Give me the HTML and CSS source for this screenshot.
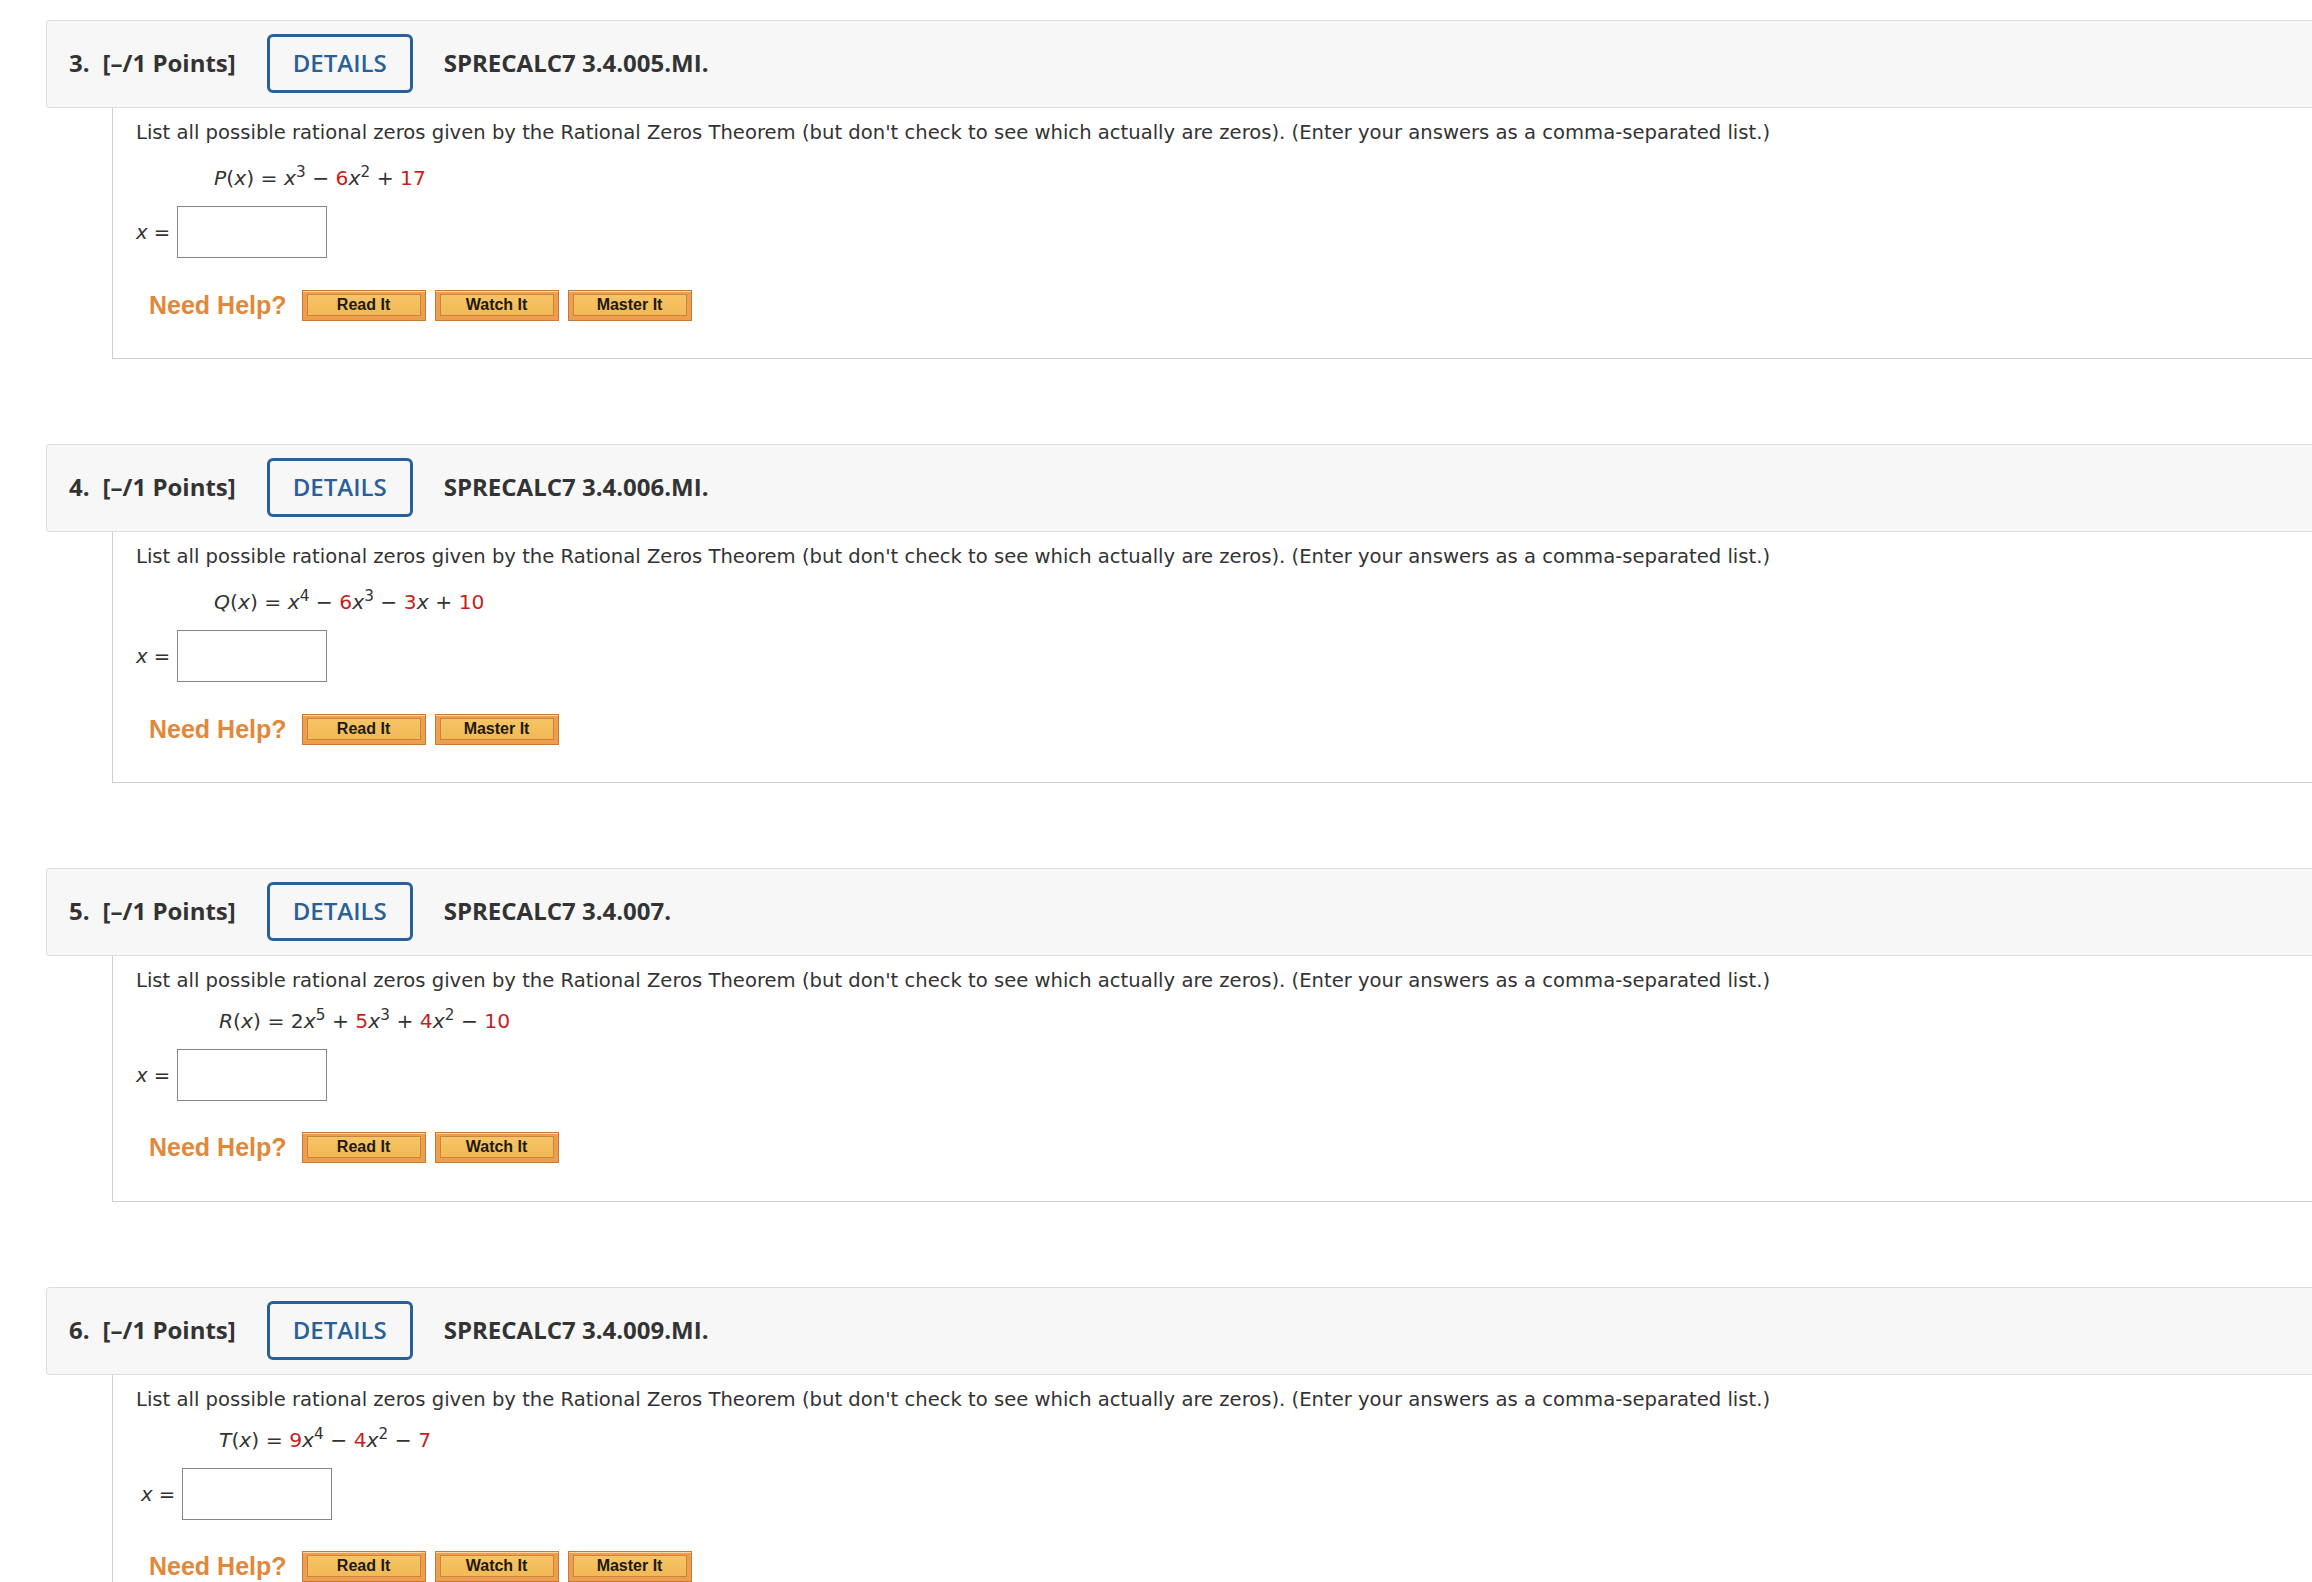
FILE: index.html
```html
<!DOCTYPE html>
<html lang="en">
<head>
<meta charset="utf-8">
<title>Questions</title>
<link rel="stylesheet" href="styles.css">
</head>
<body>
<div class="page">

  <div class="question">
    <div class="q-header">
      <span class="q-num">3.</span>
      <span class="q-points">[–/1 Points]</span>
      <span class="details">DETAILS</span>
      <span class="q-code">SPRECALC7 3.4.005.MI.</span>
    </div>
    <div class="q-body">
      <p class="q-text">List all possible rational zeros given by the Rational Zeros Theorem (but don't check to see which actually are zeros). (Enter your answers as a comma-separated list.)</p>
      <p class="eq"><i>P</i>(<i>x</i>) = <i>x</i><sup>3</sup> − <span class="red">6</span><i>x</i><sup>2</sup> + <span class="red">17</span></p>
      <div class="answer"><span class="ans-label"><i>x</i> =</span><span class="ans-box"></span></div>
      <div class="help">
        <span class="need">Need Help?</span>
        <span class="help-btn"><span class="help-inner">Read It</span></span>
        <span class="help-btn"><span class="help-inner">Watch It</span></span>
        <span class="help-btn"><span class="help-inner">Master It</span></span>
      </div>
    </div>
  </div>

  <div class="question">
    <div class="q-header">
      <span class="q-num">4.</span>
      <span class="q-points">[–/1 Points]</span>
      <span class="details">DETAILS</span>
      <span class="q-code">SPRECALC7 3.4.006.MI.</span>
    </div>
    <div class="q-body">
      <p class="q-text">List all possible rational zeros given by the Rational Zeros Theorem (but don't check to see which actually are zeros). (Enter your answers as a comma-separated list.)</p>
      <p class="eq"><i>Q</i>(<i>x</i>) = <i>x</i><sup>4</sup> − <span class="red">6</span><i>x</i><sup>3</sup> − <span class="red">3</span><i>x</i> + <span class="red">10</span></p>
      <div class="answer"><span class="ans-label"><i>x</i> =</span><span class="ans-box"></span></div>
      <div class="help">
        <span class="need">Need Help?</span>
        <span class="help-btn"><span class="help-inner">Read It</span></span>
        <span class="help-btn"><span class="help-inner">Master It</span></span>
      </div>
    </div>
  </div>

  <div class="question">
    <div class="q-header">
      <span class="q-num">5.</span>
      <span class="q-points">[–/1 Points]</span>
      <span class="details">DETAILS</span>
      <span class="q-code">SPRECALC7 3.4.007.</span>
    </div>
    <div class="q-body compact">
      <p class="q-text">List all possible rational zeros given by the Rational Zeros Theorem (but don't check to see which actually are zeros). (Enter your answers as a comma-separated list.)</p>
      <p class="eq"><i>R</i>(<i>x</i>) = 2<i>x</i><sup>5</sup> + <span class="red">5</span><i>x</i><sup>3</sup> + <span class="red">4</span><i>x</i><sup>2</sup> − <span class="red">10</span></p>
      <div class="answer"><span class="ans-label"><i>x</i> =</span><span class="ans-box"></span></div>
      <div class="help">
        <span class="need">Need Help?</span>
        <span class="help-btn"><span class="help-inner">Read It</span></span>
        <span class="help-btn"><span class="help-inner">Watch It</span></span>
      </div>
    </div>
  </div>

  <div class="question">
    <div class="q-header">
      <span class="q-num">6.</span>
      <span class="q-points">[–/1 Points]</span>
      <span class="details">DETAILS</span>
      <span class="q-code">SPRECALC7 3.4.009.MI.</span>
    </div>
    <div class="q-body compact">
      <p class="q-text">List all possible rational zeros given by the Rational Zeros Theorem (but don't check to see which actually are zeros). (Enter your answers as a comma-separated list.)</p>
      <p class="eq"><i>T</i>(<i>x</i>) = <span class="red">9</span><i>x</i><sup>4</sup> − <span class="red">4</span><i>x</i><sup>2</sup> − <span class="red">7</span></p>
      <div class="answer shifted"><span class="ans-label"><i>x</i> =</span><span class="ans-box"></span></div>
      <div class="help">
        <span class="need">Need Help?</span>
        <span class="help-btn"><span class="help-inner">Read It</span></span>
        <span class="help-btn"><span class="help-inner">Watch It</span></span>
        <span class="help-btn"><span class="help-inner">Master It</span></span>
      </div>
    </div>
  </div>

</div>
</body>
</html>
```

FILE: styles.css
```css
html, body {
  margin: 0;
  padding: 0;
  background: #ffffff;
}

.page {
  padding: 20px 0 0 46px;
  overflow: hidden;
  height: 1582px;
  box-sizing: border-box;
}

.question {
  margin-right: -30px;
  margin-bottom: 85px;
}

.q-header {
  display: flex;
  align-items: center;
  height: 88px;
  box-sizing: border-box;
  padding: 0 0 4px 22px;
  background: #f7f7f7;
  border: 1px solid #dedede;
  border-radius: 3px;
  font-family: "Open Sans", "Liberation Sans", sans-serif;
  font-size: 24px;
  font-weight: 700;
  color: #333333;
}

.q-num {
  margin-right: 13px;
}

.q-points {
  margin-right: 31px;
}

.details {
  display: flex;
  align-items: center;
  justify-content: center;
  width: 146px;
  height: 59px;
  box-sizing: border-box;
  border: 3px solid #2a5f97;
  border-radius: 6px;
  color: #2a5f97;
  font-weight: 600;
  margin: 3px 31px 0 0;
  padding-bottom: 2px;
}

.q-body {
  margin-left: 66px;
  border-left: 1px solid #cfcfcf;
  border-bottom: 1px solid #cfcfcf;
  padding: 12px 0 37px 23px;
  font-family: "DejaVu Sans", Verdana, sans-serif;
  font-size: 19.6px;
  color: #333333;
}

.q-body.compact {
  padding-bottom: 38px;
}

.q-text {
  margin: 0;
  line-height: 26px;
  white-space: nowrap;
}

.eq {
  margin: 19px 0 0 78px;
  line-height: 26px;
  font-size: 20.3px;
}

.compact .eq {
  margin-top: 14px;
  margin-left: 83px;
}

.eq sup {
  font-size: 75%;
  line-height: 0;
  vertical-align: 0.5em;
}

.red {
  color: #c81e1e;
}

.answer {
  display: flex;
  align-items: center;
  margin-top: 15px;
}

.answer.shifted {
  margin-left: 5px;
}

.ans-label {
  width: 41px;
}

.ans-box {
  width: 150px;
  height: 52px;
  box-sizing: border-box;
  border: 1px solid #858585;
  background: #ffffff;
}

.help {
  display: flex;
  align-items: center;
  gap: 9px;
  margin-top: 32px;
  padding-left: 13px;
}

.compact .help {
  margin-top: 31px;
}

.need {
  font-family: "Liberation Sans", Arial, sans-serif;
  font-weight: 700;
  font-size: 25px;
  color: #e2883a;
  margin-right: 6px;
}

.help-btn {
  display: block;
  width: 124px;
  height: 31px;
  box-sizing: border-box;
  border: 1px solid #c77a36;
  background: #ee9e4c;
  padding: 3px 4px 4px 4px;
  box-shadow: inset 0 1px 0 #f8d8a8;
}

.help-inner {
  display: flex;
  align-items: center;
  justify-content: center;
  height: 100%;
  box-sizing: border-box;
  border: 1px solid #c8853f;
  background: linear-gradient(#f6c466, #f2b955);
  font-family: "Liberation Sans", Arial, sans-serif;
  font-weight: 700;
  font-size: 16px;
  color: #1e1a14;
}
```
